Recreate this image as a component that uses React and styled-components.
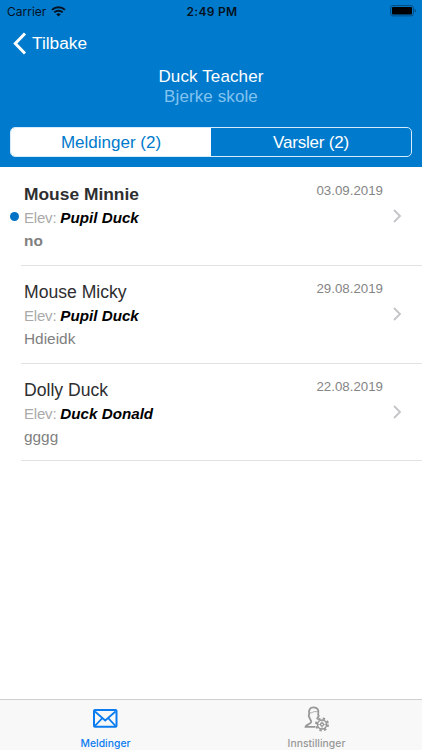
import React from "react";
import styled, { createGlobalStyle } from "styled-components";

const messages = [
	{ id: 1, name: "Mouse Minnie", pupil: "Pupil Duck", text: "no", date: "03.09.2019", unread: true },
	{ id: 2, name: "Mouse Micky", pupil: "Pupil Duck", text: "Hdieidk", date: "29.08.2019" },
	{ id: 3, name: "Dolly Duck", pupil: "Duck Donald", text: "gggg", date: "22.08.2019" },
];

const WifiIcon = () => (
	<svg width="15" height="11" viewBox="0 0 15 11" fill="none" stroke="#04121f">
		<path d="M1 3.9a9.2 9.2 0 0 1 13 0" strokeWidth="2" />
		<path d="M3.3 6.4a6 6 0 0 1 8.4 0" strokeWidth="1.9" />
		<path d="M7.5 10.6L5.2 8.3a3.3 3.3 0 0 1 4.6 0z" fill="#04121f" stroke="none" />
	</svg>
);

const BatteryIcon = () => (
	<svg width="27" height="12" viewBox="0 0 27 12">
		<rect x="0.6" y="0.6" width="22.8" height="10.3" rx="2.4" fill="none" stroke="#034a7e" />
		<rect x="2" y="2" width="20" height="7.5" rx="1" fill="#000" />
		<path d="M24.7 4v3.6q1.3-.5 1.3-1.8t-1.3-1.8z" fill="#034a7e" />
	</svg>
);

const BackIcon = () => (
	<svg width="14" height="23" viewBox="0 0 14 23" fill="none" stroke="#fff" strokeWidth="3">
		<path d="M12 1.5L2.3 11.5L12 21.5" />
	</svg>
);

const ChevronIcon = () => (
	<svg width="9" height="14" viewBox="0 0 9 14" fill="none" stroke="#c4c4c7" strokeWidth="1.8">
		<path d="M1 1l6 6l-6 6" />
	</svg>
);

const MailIcon = () => (
	<svg width="25" height="19" viewBox="0 0 25 19" fill="none" stroke="#0a7cf0" strokeWidth="1.7">
		<rect x="1" y="1" width="22.5" height="16.7" rx="1" strokeWidth="2" />
		<path d="M2 2.5l10.2 9l10.3-9M2 16.8l7.3-7.6M22.5 16.8l-7.3-7.6" />
	</svg>
);

const SettingsIcon = () => (
	<svg width="26" height="26" viewBox="0 0 26 26" fill="none" stroke="#979797" strokeWidth="1.8">
		<path d="M11.3 20.8H1.5c.2-2.6 5.8-2.4 5.8-5.2c0-1.3-1.6-2.2-1.8-4.2c-1-.7-1-2.2-.3-2.9C4.2 3.9 6 1.4 9.6 1.4c3.9 0 5.6 2.8 4.6 7.1c.6 1 .3 2.3-.4 2.8l-.8 2" />
		<path d="M5.6 6.8c3.2.3 2.8-.9 4.7-1.2c1.7-.2 2.4.3 3.7.2" strokeWidth="0.8" />
		<circle cx="18" cy="18.5" r="4.5" strokeWidth="1.5" />
		<circle cx="18" cy="18.5" r="1.5" strokeWidth="1.3" />
		<circle cx="18" cy="18.5" r="6" strokeWidth="2" strokeDasharray="2.4 2.312" />
		<path d="M18 14v3M18 20v3M13.5 18.5h3M19.5 18.5h3" strokeWidth="0.7" />
	</svg>
);

const Message = ({ message }) => (
	<Row>
		{message.unread && <UnreadDot />}
		<RowContent>
			<RowText>
				<Sender $unread={message.unread}>{message.name}</Sender>
				<Pupil>
					Elev: <b>{message.pupil}</b>
				</Pupil>
				<Preview $unread={message.unread}>{message.text}</Preview>
			</RowText>
			<RowSide>
				<MessageDate>{message.date}</MessageDate>
				<ChevronIcon />
			</RowSide>
		</RowContent>
	</Row>
);

const App = () => (
	<Screen>
		<GlobalStyle />
		<Header>
			<StatusBar>
				<Carrier>Carrier <WifiIcon /></Carrier>
				<Clock>2:49 PM</Clock>
				<Battery><BatteryIcon /></Battery>
			</StatusBar>
			<BackButton><BackIcon />Tilbake</BackButton>
			<Title>Duck Teacher</Title>
			<School>Bjerke skole</School>
			<Segments>
				<Segment $active>Meldinger (2)</Segment>
				<Segment>Varsler (2)</Segment>
			</Segments>
		</Header>
		<List>
			{messages.map(message => <Message key={message.id} message={message} />)}
		</List>
		<TabBar>
			<Tab $active>
				<TabIcon><MailIcon /></TabIcon>
				<TabLabel>Meldinger</TabLabel>
			</Tab>
			<Tab>
				<TabIcon><SettingsIcon /></TabIcon>
				<TabLabel>Innstillinger</TabLabel>
			</Tab>
		</TabBar>
	</Screen>
);

export default App;


const GlobalStyle = createGlobalStyle`
	* {
		box-sizing: border-box;
	}

	body {
		margin: 0;
		background: #fff;
		font-family: "Liberation Sans", Arial, sans-serif;
	}

	button {
		border: 0;
		padding: 0;
		background: none;
		font: inherit;
	}

	svg {
		display: block;
		flex-shrink: 0;
	}
`;

const Screen = styled.div`
	display: flex;
	flex-direction: column;
	width: 422px;
	height: 750px;
	overflow: hidden;
`;

const Header = styled.header`
	height: 167px;
	background: #007acc;
	color: #fff;
`;

const StatusBar = styled.div`
	display: grid;
	grid-template-columns: 1fr auto 1fr;
	align-items: center;
	height: 22px;
	padding: 0 5px 0 7px;
	font-family: Inter, sans-serif;
	font-size: 12px;
	color: #04121f;
`;

const Carrier = styled.div`
	display: flex;
	align-items: center;
	gap: 5px;
`;

const Clock = styled.div`
	font-weight: 600;
	letter-spacing: 0.3px;
`;

const Battery = styled.div`
	justify-self: end;
`;

const BackButton = styled.button`
	display: flex;
	align-items: center;
	gap: 5px;
	height: 43px;
	margin-left: 13px;
	font-size: 17.3px;
	color: #fff;
`;

const Title = styled.h1`
	margin: 1px 0 0;
	font-size: 17px;
	font-weight: 400;
	line-height: 21px;
	text-align: center;
	letter-spacing: 0.12px;
`;

const School = styled.div`
	font-size: 17px;
	line-height: 20px;
	text-align: center;
	letter-spacing: 0.1px;
	color: #83c3f0;
`;

const Segments = styled.div`
	display: flex;
	height: 30px;
	margin: 20px 10px 0;
	border: 1px solid #d5ebfa;
	border-radius: 5px;
	overflow: hidden;
`;

const Segment = styled.button`
	flex: 1;
	padding: 2px 0 0;
	font-size: 17px;
	letter-spacing: ${props => (props.$active ? "0" : "-0.2px")};
	color: ${props => (props.$active ? "#007acc" : "#fff")};
	background: ${props => (props.$active ? "#fff" : "transparent")};
`;

const List = styled.main`
	flex: 1;
	padding-top: 1px;
`;

const Row = styled.div`
	position: relative;
	padding-left: 21px;
`;

const UnreadDot = styled.span`
	position: absolute;
	left: 10px;
	top: 44px;
	width: 9px;
	height: 9px;
	border-radius: 50%;
	background: #0072c6;
`;

const RowContent = styled.div`
	display: flex;
	justify-content: space-between;
	height: 97.8px;
	padding: 14px 20px 0 3px;
	border-bottom: 1px solid #e2e2e4;
`;

const RowText = styled.div`
	display: flex;
	flex-direction: column;
`;

const Sender = styled.div`
	font-size: ${props => (props.$unread ? "17.4px" : "17.6px")};
	font-weight: ${props => (props.$unread ? 700 : 400)};
	line-height: 24px;
	color: #2e2e30;
`;

const Pupil = styled.div`
	font-size: 15px;
	line-height: 23px;
	letter-spacing: -0.2px;
	color: #aaa;

	& > b {
		font-size: 15.2px;
		font-style: italic;
		letter-spacing: 0;
		color: #000;
	}
`;

const Preview = styled.div`
	font-size: 15.4px;
	font-weight: ${props => (props.$unread ? 700 : 400)};
	line-height: 24px;
	color: #808080;
`;

const RowSide = styled.div`
	display: flex;
	flex-direction: column;
	align-items: flex-end;
	gap: 9px;
`;

const MessageDate = styled.div`
	padding-right: 19px;
	font-size: 13.3px;
	line-height: 18px;
	color: #858585;
`;

const TabBar = styled.nav`
	display: flex;
	height: 51px;
	border-top: 1px solid #cfcfcf;
	background: #f8f8f8;
`;

const Tab = styled.button`
	display: flex;
	flex: 1;
	flex-direction: column;
	align-items: center;
	color: ${props => (props.$active ? "#0a7cf0" : "#979797")};
`;

const TabIcon = styled.div`
	display: flex;
	align-items: center;
	justify-content: center;
	height: 37px;
`;

const TabLabel = styled.span`
	font-family: Inter, sans-serif;
	font-size: 10.3px;
	font-weight: 500;
	line-height: 12px;
	letter-spacing: 0.05px;
`;
